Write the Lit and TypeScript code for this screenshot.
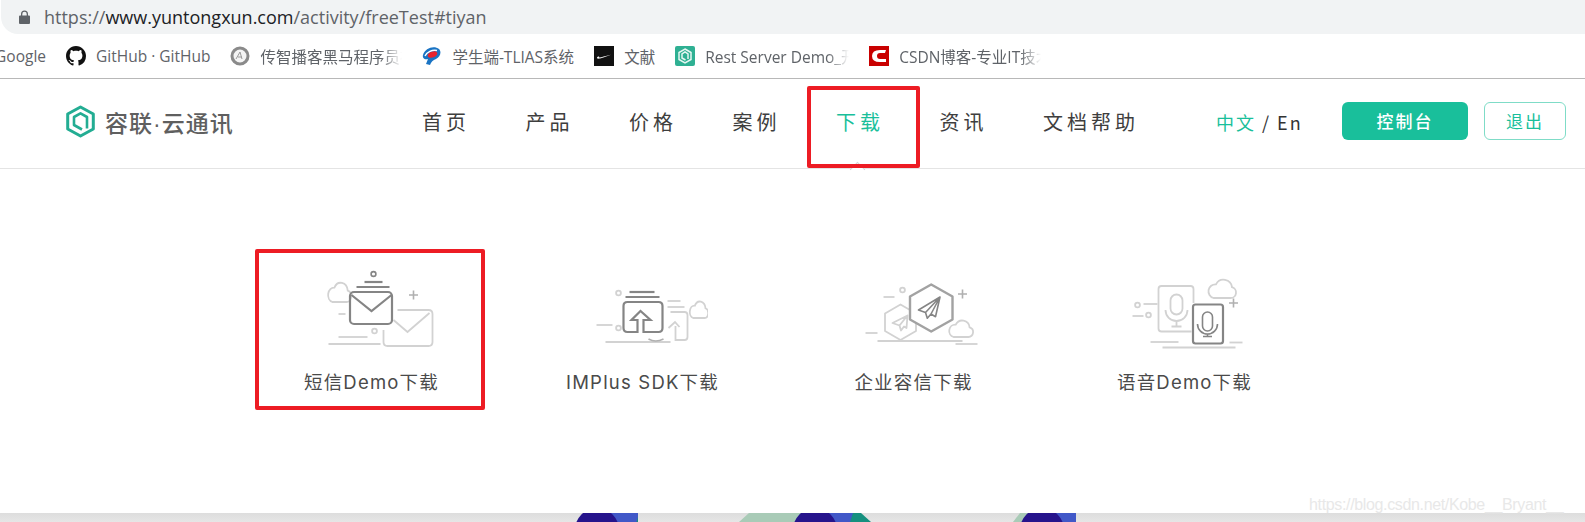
import { LitElement, html, css, svg } from "lit";
import { customElement } from "lit/decorators.js";

const cloud = (x: number, y: number, w: number, h: number, cls: string) => svg`
  <path class=${cls} vector-effect="non-scaling-stroke" transform="translate(${x} ${y}) scale(${w / 30} ${h / 20})"
    d="M7 20 H24 a5.5 5.5 0 0 0 1.5 -10.8 A8.5 8.5 0 0 0 9.5 6.3 A7 7 0 0 0 7 20 Z" />`;
const plus = (x: number, y: number, cls: string) => svg`
  <path class=${cls} d="M${x - 4.5} ${y} h9 M${x} ${y - 4.5} v9" />`;
const dash = (x1: number, x2: number, y: number, cls: string) => svg`
  <path class=${cls} d="M${x1} ${y} H${x2}" />`;
const dot = (x: number, y: number, cls: string) => svg`
  <circle class=${cls} cx=${x} cy=${y} r="2.4" />`;

const smsIcon = svg`
  ${cloud(326, 281, 25, 21, "l")}
  ${dash(338, 345, 314, "l")}
  ${dot(374, 331, "l")}
  ${dash(338, 367, 337, "l")}
  ${dash(328, 380, 344, "l")}
  ${plus(413, 295, "m")}
  <path class="l" d="M397 310 H428 Q432 310 432 314 V342 Q432 346 428 346 H387 Q383 346 383 342 V330" />
  <path class="l" d="M393 320 L407 332 L429 313" />
  <rect class="d" x="349.5" y="292" width="42" height="32" rx="4" />
  <path class="d" d="M351 295 L371 311 L391 295" />
  ${dash(356, 389, 287, "d")}
  ${dash(364, 382, 282, "d")}
  <circle class="d thin" cx="373" cy="274" r="2.4" />`;

const sdkIcon = svg`
  ${dot(618, 293, "l")}
  ${dot(618, 328, "l")}
  ${dash(596, 612, 325, "l")}
  ${dash(605, 670, 342, "l")}
  ${dash(667, 680, 301, "l")}
  ${dash(667, 684, 307, "l")}
  ${cloud(688, 300, 20, 18, "l")}
  <path class="l" d="M670 312 H684 Q687 312 687 315 V337 Q687 340 684 340 H675 V326 M668 328 L674.5 322 L679 327" />
  <path class="m" d="M648 339 Q655 343 663 339" />
  ${dash(625, 659, 297, "d")}
  ${dash(629, 654, 292, "d")}
  <path class="d" d="M637 332 H627 Q623 332 623 328 V306 Q623 302 627 302 H658 Q662 302 662 306 V328 Q662 332 658 332 H643 V320 H650 L640 311 L631 320 H637 Z" />`;

const imIcon = svg`
  ${dot(902, 290, "l")}
  ${dash(883, 894, 297, "l")}
  ${plus(962, 294, "m")}
  ${dash(865, 877, 333, "l")}
  ${dash(877, 962, 341, "l")}
  ${dash(955, 977, 344, "l")}
  <path class="l" stroke-linejoin="round" d="M900 304.5 L915.5 313.5 V331 L900 340 L884.5 331 V313.5 Z" />
  <path class="l" stroke-linejoin="round" d="M907 315.5 L892 323 L899 325.5 L900.5 330.5 L903.5 326.5 L906 328 Z M899 325.5 L907 315.5" />
  ${cloud(947, 319, 26, 18, "l")}
  <path class="d w" stroke-linejoin="round" d="M930.7 284.5 L952 296.5 V319.5 L930.7 331.5 L909.5 319.5 V296.5 Z" />
  <path class="d2" stroke-linejoin="round" d="M939.5 297 L918 310 L925 312.5 L926.8 318.2 L930.5 314 L935 316.7 Z M925 312.5 L939.5 297 L930.5 314" />`;

const voiceIcon = svg`
  ${dot(1137, 305, "l")}
  ${dash(1143, 1157, 304, "l")}
  ${dash(1132, 1143, 316, "l")}
  ${dot(1148, 315, "l")}
  ${dash(1150, 1178, 342, "l")}
  ${dash(1162, 1235, 347.5, "l")}
  ${dash(1229, 1242, 342.5, "l")}
  ${cloud(1206, 278, 30, 20, "l")}
  ${plus(1233, 303, "m")}
  <path class="l" d="M1191 331.5 H1161 Q1158 331.5 1158 328.5 V289 Q1158 286 1161 286 H1190 Q1193 286 1193 289 V303" />
  <rect class="l" x="1170" y="294.5" width="12" height="20" rx="6" />
  <path class="l" d="M1165 310 A11 11 0 0 0 1187 310 M1176 321 V326 M1171 326.5 H1181" />
  <rect class="d" x="1192.5" y="304.5" width="30" height="39" rx="2.5" />
  <rect class="d thin" x="1202" y="312" width="10" height="19" rx="5" />
  <path class="d thin" d="M1197 324 A10 10 0 0 0 1217 324 M1207 334 V336.5 M1202.5 336.5 H1211.5" />`;

const items = [
  { label: "短信Demo下载", cx: 371.5, art: smsIcon },
  { label: "IMPlus SDK下载", cx: 642.5, art: sdkIcon },
  { label: "企业容信下载", cx: 913.5, art: imIcon },
  { label: "语音Demo下载", cx: 1184.5, art: voiceIcon },
];

const links = ["首页", "产品", "价格", "案例", "下载", "资讯", "文档帮助"];

@customElement("app-root")
export class AppRoot extends LitElement {
  static styles = css`
    :host {
      display: flex;
      flex-direction: column;
      position: relative;
      width: 1585px;
      height: 522px;
      overflow: hidden;
      background: #fff;
      font-family: "Liberation Sans", "Noto Sans CJK SC", sans-serif;
    }
    .address {
      height: 34px;
      margin-left: 1px;
      flex: none;
      display: flex;
      align-items: center;
      gap: 14px;
      padding-left: 18px;
      background: #f1f3f4;
      border-bottom-left-radius: 17px;
      font: 18px "Open Sans", "Noto Sans", sans-serif;
      color: #5f6368;
    }
    .address svg { flex: none; }
    .address b { font-weight: 400; color: #202124; }
    .bookmarks {
      height: 44px;
      flex: none;
      display: flex;
      align-items: center;
      gap: 20px;
      border-bottom: 1px solid #b8b8b8;
      font: 15.5px "Open Sans", "Noto Sans CJK SC", sans-serif;
      color: #5f6368;
      overflow: hidden;
      white-space: nowrap;
    }
    .bm { display: flex; align-items: center; gap: 10px; flex: none; }
    .bm svg { flex: none; display: block; }
    .clip-start { width: 46px; display: flex; justify-content: flex-end; overflow: hidden; }
    .fade {
      overflow: hidden;
      -webkit-mask-image: linear-gradient(to right, #000 85%, transparent);
      mask-image: linear-gradient(to right, #000 85%, transparent);
    }
    .f142 { width: 142px; }
    .f144 { width: 144px; }
    .nav {
      height: 85px;
      padding-bottom: 4px;
      flex: none;
      display: flex;
      align-items: center;
      border-bottom: 1px solid #e4e4e4;
    }
    .brand {
      box-sizing: border-box;
      width: 422px;
      padding-left: 66px;
      flex: none;
      display: flex;
      align-items: center;
      gap: 10px;
      font: 500 23px "Liberation Sans", "Noto Sans CJK SC", sans-serif;
      letter-spacing: 1px;
      color: #5f5f5f;
    }
    .links { display: flex; gap: 55.5px; }
    .link {
      position: relative;
      font: 400 20px/28px "Noto Sans CJK SC", sans-serif;
      letter-spacing: 4px;
      color: #3e3e3e;
    }
    .link.on { color: #19bf9b; }
    .caret {
      position: absolute;
      left: 16px;
      top: 56px;
      width: 10px;
      height: 10px;
      background: #fff;
      border-left: 1px solid #d4d4d4;
      border-top: 1px solid #d4d4d4;
      transform: rotate(45deg);
    }
    .lang {
      margin-left: 77px;
      width: 126px;
      flex: none;
      font: 400 18px/26px "Noto Sans CJK SC", "Noto Sans", sans-serif;
      letter-spacing: 2px;
      color: #333;
    }
    .lang em { font-style: normal; color: #19bf9b; }
    .btn {
      flex: none;
      height: 38px;
      margin-bottom: 2px;
      box-sizing: border-box;
      display: flex;
      align-items: center;
      justify-content: center;
      border-radius: 6px;
      font: 400 17px "Noto Sans CJK SC", sans-serif;
      letter-spacing: 2px;
    }
    .primary { width: 126px; background: #19bf9b; color: #fff; font-weight: 500; }
    .ghost {
      width: 82px;
      margin-left: 16px;
      color: #19bf9b;
      border: 1.5px solid #7fdcc7;
    }
    main {
      flex: 1;
      display: grid;
      grid-template-columns: repeat(4, 271px);
      padding: 99px 0 0 236px;
      align-content: start;
    }
    .item { display: flex; flex-direction: column; align-items: center; }
    .item svg { display: block; }
    .item span {
      margin-top: 12px;
      font: 18.5px/24px Inter, "Noto Sans CJK SC", sans-serif;
      letter-spacing: 1.2px;
      color: #4a4a4a;
      white-space: nowrap;
    }
    .l, .m, .d, .d2 { fill: none; }
    .l { stroke: #d2d2d2; stroke-width: 1.8; }
    .m { stroke: #b0b0b0; stroke-width: 1.6; }
    .d { stroke: #858585; stroke-width: 2.2; }
    .d.thin { stroke-width: 1.6; }
    .d.w { fill: #fff; stroke: #a2a2a2; stroke-width: 2.4; }
    .d2 { stroke: #858585; stroke-width: 1.6; }
    .strip { height: 9px; flex: none; display: block; }
    .mark {
      position: absolute;
      left: 1309px;
      top: 495px;
      font: 16px/20px "Liberation Sans", sans-serif;
      letter-spacing: -0.35px;
      color: #e8e8e8;
      white-space: nowrap;
    }
    .red {
      position: absolute;
      box-sizing: border-box;
      border: 4px solid #ed1c24;
      border-radius: 2px;
      pointer-events: none;
    }
    .r1 { left: 807px; top: 86px; width: 113px; height: 82px; }
    .r2 { left: 255px; top: 249px; width: 230px; height: 161px; }
  `;

  render() {
    return html`
      <div class="address">
        <svg width="11" height="14" viewBox="0 0 11 14">
          <path fill="#5f6368" d="M1 5.5 H2 V4 a3.5 3.5 0 0 1 7 0 V5.5 H10 Q11 5.5 11 6.5 V13 Q11 14 10 14 H1 Q0 14 0 13 V6.5 Q0 5.5 1 5.5 Z M3.3 5.5 H7.7 V4 a2.2 2.2 0 0 0 -4.4 0 Z" />
        </svg>
        <span>https://<b>www.yuntongxun.com</b>/activity/freeTest#tiyan</span>
      </div>

      <div class="bookmarks">
        <div class="bm clip-start"><span>Google</span></div>

        <div class="bm">
          <svg width="20" height="20" viewBox="0 0 16 16">
            <path fill="#111" d="M8 0C3.58 0 0 3.58 0 8c0 3.54 2.29 6.53 5.47 7.59.4.07.55-.17.55-.38 0-.19-.01-.82-.01-1.49-2.01.37-2.53-.49-2.69-.94-.09-.23-.48-.94-.82-1.13-.28-.15-.68-.52-.01-.53.63-.01 1.08.58 1.23.82.72 1.21 1.87.87 2.33.66.07-.52.28-.87.51-1.07-1.78-.2-3.64-.89-3.64-3.95 0-.87.31-1.59.82-2.15-.08-.2-.36-1.02.08-2.12 0 0 .67-.21 2.2.82.64-.18 1.32-.27 2-.27s1.36.09 2 .27c1.53-1.04 2.2-.82 2.2-.82.44 1.1.16 1.92.08 2.12.51.56.82 1.27.82 2.15 0 3.07-1.87 3.75-3.65 3.95.29.25.54.73.54 1.48 0 1.07-.01 1.93-.01 2.2 0 .21.15.46.55.38A8.01 8.01 0 0 0 16 8c0-4.42-3.58-8-8-8z" />
          </svg>
          <span>GitHub · GitHub</span>
        </div>

        <div class="bm">
          <svg width="20" height="20" viewBox="0 0 20 20">
            <circle cx="10" cy="10" r="8" fill="#f4f4f4" stroke="#8a8a8a" stroke-width="3" />
            <path d="M6 13 L10 6 L12 13 M8 11 H12" fill="none" stroke="#999" stroke-width="1" />
          </svg>
          <span class="fade f142">传智播客黑马程序员社区</span>
        </div>

        <div class="bm">
          <svg width="20" height="20" viewBox="0 0 20 20">
            <path d="M17 3 C12 -1 3 2 1 9 C0 12 3 14 6 13 L4 18 L8 19 C9 16 11 14 14 13 C18 11 20 6 17 3 Z" fill="#1a74c4" />
            <ellipse cx="10.5" cy="8.5" rx="5" ry="3" fill="#e8232d" transform="rotate(-20 10.5 8.5)" />
            <path d="M3 10 C5 6 10 3.5 15 4.5" fill="none" stroke="#fff" stroke-width="1.4" />
          </svg>
          <span>学生端-TLIAS系统</span>
        </div>

        <div class="bm">
          <svg width="20" height="20" viewBox="0 0 20 20">
            <rect width="20" height="20" fill="#111" />
            <path d="M3 12 C3.5 13.5 6 12.8 17 8.8 C10 10.5 6 11.8 5 11.3 C4.6 11 5 10.4 5.5 10 C4 10.5 3 11 3 12 Z" fill="#fff" />
          </svg>
          <span>文献</span>
        </div>

        <div class="bm">
          <svg width="20" height="20" viewBox="0 0 20 20">
            <rect width="20" height="20" rx="2" fill="#2fb093" />
            <path d="M10 3 L16 6.5 V13.5 L10 17 L4 13.5 V6.5 Z M10.5 14 L7 12 V8 L10 6 L13 8 V13" fill="none" stroke="#e6f6f2" stroke-width="1.5" />
          </svg>
          <span class="fade f144">Rest Server Demo_开发</span>
        </div>

        <div class="bm">
          <svg width="20" height="20" viewBox="0 0 20 20">
            <rect width="20" height="20" fill="#c90000" />
            <path d="M17 4 H11 Q3 4 3 10 Q3 16 11 16 H17 V13 H11 Q8 13 8 10 Q8 7 11 7 H16 Z" fill="#fff" />
          </svg>
          <span class="fade f142">CSDN博客-专业IT技术</span>
        </div>
      </div>

      <header class="nav">
        <div class="brand">
          <svg width="29" height="33" viewBox="66 108.5 29 33">
            <path fill="none" stroke="#23ad93" stroke-width="3" stroke-linejoin="round"
              d="M80.5 110.5 L93.3 117.5 V132.5 L80.5 139.5 L67.7 132.5 V117.5 Z" />
            <path fill="none" stroke="#23ad93" stroke-width="2.6" stroke-linejoin="round"
              d="M82 133 L74 128.5 V120.5 L80.5 116.8 L87 120.5 V132" />
          </svg>
          <span>容联·云通讯</span>
        </div>
        <div class="links">
          ${links.map(
            (l) => html`<div class="link ${l === "下载" ? "on" : ""}">${l}${l === "下载" ? html`<i class="caret"></i>` : ""}</div>`
          )}
        </div>
        <div class="lang"><em>中文</em> / En</div>
        <div class="btn primary">控制台</div>
        <div class="btn ghost">退出</div>
      </header>

      <main>
        ${items.map(
          (it) => html`
            <div class="item">
              <svg width="130" height="90" viewBox="${it.cx - 65} 268 130 90">${it.art}</svg>
              <span>${it.label}</span>
            </div>`
        )}
      </main>

      <svg class="strip" width="1585" height="9" viewBox="0 513 1585 9">
        <defs>
          <linearGradient id="g" x1="0" y1="0" x2="0" y2="1">
            <stop offset="0" stop-color="#dddddd" />
            <stop offset="1" stop-color="#e6e6e6" />
          </linearGradient>
        </defs>
        <rect x="0" y="513" width="1585" height="9" fill="url(#g)" />
        <rect x="600" y="513" width="38" height="9" fill="#4158c8" />
        <path d="M636.5 522 L638 517 V522 Z" fill="#16907f" />
        <circle cx="597" cy="530" r="22" fill="#26148c" />
        <path d="M739 522 L749 513 H805 V522 Z" fill="#a9cbb7" />
        <rect x="805" y="513" width="52" height="9" fill="#4158c8" />
        <path d="M853 513 H861 L871 522 H850 Z" fill="#16907f" />
        <circle cx="815" cy="530" r="22" fill="#26148c" />
        <path d="M1013 522 L1020 513 H1045 V522 Z" fill="#a9cbb7" />
        <rect x="1040" y="513" width="36" height="9" fill="#4158c8" />
        <circle cx="1042" cy="530" r="22" fill="#26148c" />
      </svg>

      <div class="mark">https://blog.csdn.net/Kobe__Bryant__</div>
      <div class="red r1"></div>
      <div class="red r2"></div>
    `;
  }
}
